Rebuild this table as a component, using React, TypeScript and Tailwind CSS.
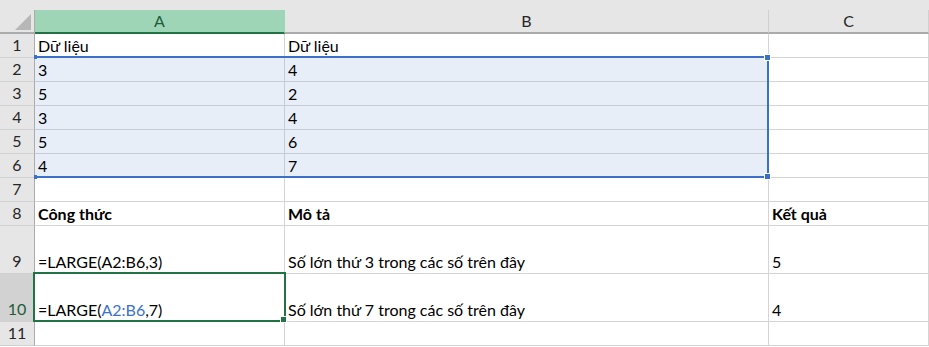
import { Fragment } from 'react';

type Cell = { text: React.ReactNode; bold?: boolean };
type Row = { n: number; h: string; cells: Cell[] };

const font = { fontFamily: 'Lato, "Open Sans", sans-serif' };

const rows: Row[] = [
  { n: 1, h: 'h-[24px]', cells: [{ text: 'Dữ liệu' }, { text: 'Dữ liệu' }, { text: '' }] },
  { n: 2, h: 'h-[24px]', cells: [{ text: '3' }, { text: '4' }, { text: '' }] },
  { n: 3, h: 'h-[24px]', cells: [{ text: '5' }, { text: '2' }, { text: '' }] },
  { n: 4, h: 'h-[24px]', cells: [{ text: '3' }, { text: '4' }, { text: '' }] },
  { n: 5, h: 'h-[24px]', cells: [{ text: '5' }, { text: '6' }, { text: '' }] },
  { n: 6, h: 'h-[24px]', cells: [{ text: '4' }, { text: '7' }, { text: '' }] },
  { n: 7, h: 'h-[24px]', cells: [{ text: '' }, { text: '' }, { text: '' }] },
  {
    n: 8,
    h: 'h-[24px]',
    cells: [
      { text: 'Công thức', bold: true },
      { text: 'Mô tả', bold: true },
      { text: 'Kết quả', bold: true },
    ],
  },
  {
    n: 9,
    h: 'h-[48px]',
    cells: [{ text: '=LARGE(A2:B6,3)' }, { text: 'Số lớn thứ 3 trong các số trên đây' }, { text: '5' }],
  },
  {
    n: 10,
    h: 'h-[48px]',
    cells: [
      {
        text: (
          <>
            =LARGE(<span className="text-[#3c72c8]">A2:B6</span>,7)
          </>
        ),
      },
      { text: 'Số lớn thứ 7 trong các số trên đây' },
      { text: '4' },
    ],
  },
  { n: 11, h: 'h-[24px]', cells: [{ text: '' }, { text: '' }, { text: '' }] },
];

const colWidths = ['w-[250px]', 'w-[484px]', 'w-[160px]'];

const inRange = (r: number, c: number) => r >= 2 && r <= 6 && c <= 1;

export default function App() {
  return (
    <div className="relative h-[347px] w-[929px] overflow-hidden bg-white text-black" style={font}>
      {/* column headers */}
      <div className="h-[10px] bg-[#e6e6e6]" />
      <div className="flex h-[24px] bg-[#e6e6e6]">
        <div className="flex w-[35px] items-end justify-end border-b-2 border-r border-[#ababab] pb-[2px] pr-[3px]">
          <div className="h-0 w-0 border-b-[16px] border-l-[16px] border-b-[#b7b7b7] border-l-transparent" />
        </div>
        <div className="flex w-[250px] items-center justify-center border-b-2 border-r border-b-[#217346] border-r-[#9fd5b7] bg-[#9fd5b7] text-[16px] text-[#1e5c3a]">
          A
        </div>
        <div className="flex w-[484px] items-center justify-center border-b-2 border-r border-b-[#ababab] border-r-[#d0d0d0] text-[16px] text-[#262626]">
          B
        </div>
        <div className="flex w-[160px] items-center justify-center border-b-2 border-r border-b-[#ababab] border-r-[#d0d0d0] text-[16px] text-[#262626]">
          C
        </div>
      </div>

      {/* grid body */}
      {rows.map((row) => {
        const active = row.n === 10;
        return (
          <div key={row.n} className={`flex ${row.h}`}>
            <div
              className={`flex w-[35px] items-end justify-center border-b border-r border-b-[#d0d0d0] border-r-[#ababab] pb-[3px] text-[16px] leading-[18px] ${
                active ? 'bg-[#d2d2d2] text-[#1e5c3a]' : 'bg-[#e6e6e6] text-[#262626]'
              }`}
            >
              {row.n}
            </div>
            {row.cells.map((cell, c) => (
              <Fragment key={c}>
                <div
                  className={`flex ${colWidths[c]} items-end overflow-visible whitespace-nowrap border-b border-r px-[3px] pb-[2px] text-[16px] leading-[18px] ${
                    inRange(row.n, c) ? 'border-[#c6ccd6] bg-[#e8eef8]' : 'border-[#d4d4d4]'
                  } ${cell.bold ? 'font-bold' : ''}`}
                >
                  {cell.text}
                </div>
              </Fragment>
            ))}
          </div>
        );
      })}

      {/* selected range A2:B6, with its corner handles */}
      <div className="pointer-events-none absolute left-[35px] top-[56px] h-[122px] w-[734px] border-y-2 border-r-2 border-[#3a70c9]">
        <div className="absolute -left-px -top-[3px] h-[4px] w-[3px] bg-[#3a70c9]" />
        <div className="absolute -bottom-[3px] -left-px h-[4px] w-[3px] bg-[#3a70c9]" />
        <div className="absolute -right-[4px] -top-[4px] h-[7px] w-[7px] border border-white bg-[#3a70c9]" />
        <div className="absolute -bottom-[4px] -right-[4px] h-[7px] w-[7px] border border-white bg-[#3a70c9]" />
      </div>

      {/* active cell A10 */}
      <div className="pointer-events-none absolute left-[33px] top-[272px] h-[50px] w-[253px] border-2 border-[#217346]">
        <div className="absolute -bottom-[3px] -right-[3px] h-[7px] w-[7px] border border-white bg-[#217346]" />
      </div>
    </div>
  );
}
